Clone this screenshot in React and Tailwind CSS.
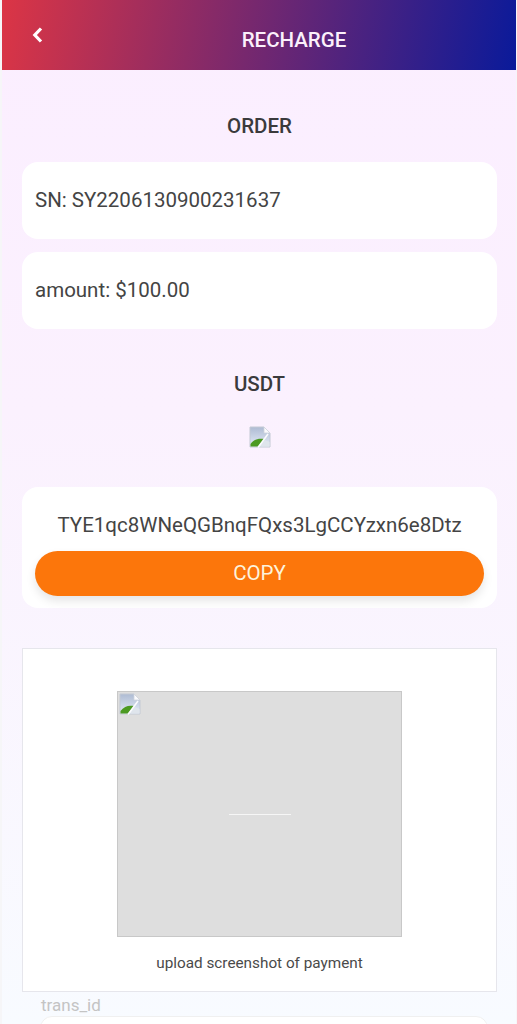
const font = { fontFamily: 'Roboto, sans-serif' };

function BrokenImage({ className }) {
  return (
    <svg className={className} viewBox="0 0 22 22" width="22" height="22">
      <defs>
        <linearGradient id="sky" x1="0" y1="0" x2="0" y2="1">
          <stop offset="0" stopColor="#aebbd3" />
          <stop offset="1" stopColor="#e6edf8" />
        </linearGradient>
      </defs>
      <path d="M1 1H15L21 7V21H1Z" fill="url(#sky)" stroke="#c3c9d4" strokeWidth="1" />
      <path d="M1.5 20.5V18C5 13 10 12 15 13L9 20.5Z" fill="#4c9a22" />
      <path d="M11 20.5L16 14L20.5 16V20.5Z" fill="#dfe5ec" />
      <path d="M15 1V7H21Z" fill="#fbfbfd" stroke="#cfd4dc" strokeWidth="0.8" />
      <path d="M9 21.5L19 8" stroke="#fbfbfd" strokeWidth="1.6" />
    </svg>
  );
}

export default function App() {
  return (
    <div className="h-[1024px] overflow-hidden bg-[#f6f6f8] pl-[2px] pr-px" style={font}>
      <div className="h-full bg-gradient-to-b from-[#fbeeff] via-[#fbf1fe] via-40% to-[#f8fbff] text-[#333333]">
        <header className="h-[70px] bg-[linear-gradient(100deg,#dc3545,#0a1a9a)] flex items-start">
          <svg className="ml-[29px] mt-[26px] shrink-0" width="13" height="18" viewBox="0 0 13 18" fill="none">
            <path d="M10 2.5L3.8 9L10 15.5" stroke="#ffffff" strokeWidth="3.2" />
          </svg>
          <h1 className="flex-1 pl-[28px] mt-[28px] text-center text-[20.5px] leading-6 font-medium text-[#fbf0fb]">RECHARGE</h1>
        </header>

        <main className="pl-[20px] pr-[19px]">
          <h2 className="mt-[44px] text-center text-[20.5px] leading-6 font-medium text-[#3a3a3c]">ORDER</h2>

          <div className="mt-[24px] h-[77px] rounded-[16px] bg-white flex items-center px-[13px] text-[20.5px] text-[#444444] pb-[1px]">
            SN: SY2206130900231637
          </div>
          <div className="mt-[13px] h-[77px] rounded-[16px] bg-white flex items-center px-[13px] text-[20.5px] text-[#444444] pb-[1px]">
            amount: $100.00
          </div>

          <h2 className="mt-[43px] text-center text-[20.5px] leading-6 font-medium text-[#3a3a3c]">USDT</h2>

          <div className="mt-[30px] h-[22px] flex justify-center">
            <BrokenImage />
          </div>

          <section className="mt-[39px] h-[121px] rounded-[16px] bg-white px-[13px] pt-[26px]">
            <p className="text-center text-[20.5px] leading-6 text-[#444444] whitespace-nowrap">
              TYE1qc8WNeQGBnqFQxs3LgCCYzxn6e8Dtz
            </p>
            <button className="mt-[14px] h-[45px] w-full rounded-full bg-[#fc760b] text-[20.5px] text-[#fdf3dc] shadow-[0_5px_10px_rgba(0,0,0,0.1)]">
              COPY
            </button>
          </section>

          <section className="mt-[40px] h-[344px] bg-white border border-[#e6e6ec] flex flex-col items-center pt-[42px]">
            <div className="relative w-[285px] h-[246px] bg-[#dedede] border border-[#c8c8c8] flex items-center justify-center">
              <BrokenImage className="absolute left-[1px] top-[1px]" />
              <div className="w-[62px] h-px bg-[#f6f6f6]" />
            </div>
            <p className="mt-[16px] text-[15.3px] leading-5 text-[#4a4a4a]">upload screenshot of payment</p>
          </section>

          <label className="block ml-[19px] mt-[3px] text-[17px] leading-5 text-[#c4c4c4]">trans_id</label>
          <div className="ml-[18px] mr-[9px] mt-px h-[40px] rounded-[12px] bg-white border border-[#f0f0f0]" />
        </main>
      </div>
    </div>
  );
}
